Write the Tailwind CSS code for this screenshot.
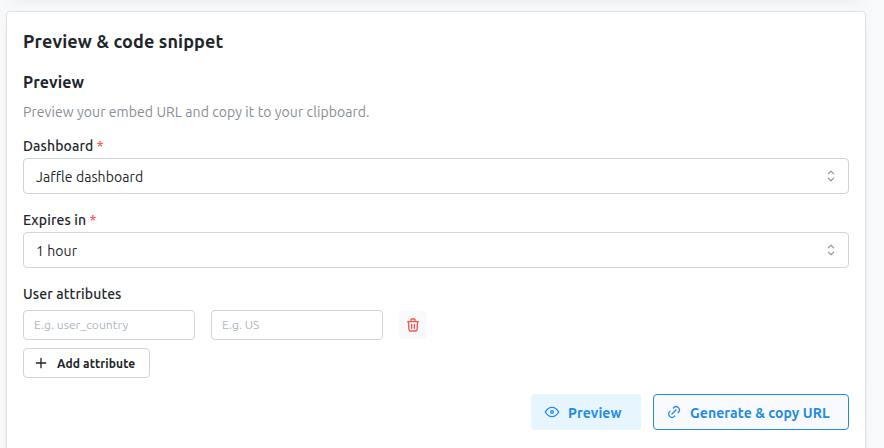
<!DOCTYPE html>
<html lang="en">
<head>
<meta charset="utf-8">
<title>Preview &amp; code snippet</title>
<script src="https://cdn.jsdelivr.net/npm/@tailwindcss/browser@4"></script>
</head>
<body class="h-[448px] overflow-hidden bg-[#f8f9fa] font-['Ubuntu','Noto_Sans',sans-serif] text-sm text-[#212529]">
<div class="flex h-[500px] w-[866px] flex-col pl-1.5">
  <div class="-mt-[44px] mb-[15px] h-10 shrink-0 rounded-sm border border-[#dee2e6] bg-white shadow-[0_1px_3px_rgba(0,0,0,0.05),0_10px_15px_-5px_rgba(0,0,0,0.05),0_7px_7px_-5px_rgba(0,0,0,0.04)]"></div>
  <main class="flex grow flex-col rounded-t-sm border border-[#dee2e6] bg-white px-4 pt-4 shadow-[0_1px_3px_rgba(0,0,0,0.05),0_10px_15px_-5px_rgba(0,0,0,0.05),0_7px_7px_-5px_rgba(0,0,0,0.04)]">
    <h1 class="h-7 text-lg leading-[27px] font-bold whitespace-nowrap"><span class="tracking-[0.13px]">Preview &amp; code snippet</span></h1>
    <h2 class="mt-[14px] h-6 text-base leading-6 font-bold"><span class="tracking-[0.08px]">Preview</span></h2>
    <p class="mt-[7px] h-[22px] leading-[22px] text-[#868e96]"><span class="tracking-[0.075px]">Preview your embed URL and copy it to your clipboard.</span></p>

    <label class="mt-3 h-[23px] leading-[23px] font-medium"><span class="tracking-[0.1px]">Dashboard</span> <span class="text-[#fa5252]">*</span></label>
    <div class="flex h-9 items-center justify-between rounded border border-[#ced4da] pr-2 pl-3">
      <span class="pt-0.5 tracking-[0.08px]">Jaffle dashboard</span>
      <svg class="size-[18px]" viewBox="0 0 15 15" fill="#868e96"><path fill-rule="evenodd" clip-rule="evenodd" d="M4.93179 5.43179C4.75605 5.60753 4.75605 5.89245 4.93179 6.06819C5.10753 6.24392 5.39245 6.24392 5.56819 6.06819L7.49999 4.13638L9.43179 6.06819C9.60753 6.24392 9.89245 6.24392 10.0682 6.06819C10.2439 5.89245 10.2439 5.60753 10.0682 5.43179L7.81819 3.18179C7.73379 3.0974 7.61933 3.04999 7.49999 3.04999C7.38064 3.04999 7.26618 3.0974 7.18179 3.18179L4.93179 5.43179ZM10.0682 9.56819C10.2439 9.39245 10.2439 9.10753 10.0682 8.93179C9.89245 8.75606 9.60753 8.75606 9.43179 8.93179L7.49999 10.8636L5.56819 8.93179C5.39245 8.75606 5.10753 8.75606 4.93179 8.93179C4.75605 9.10753 4.75605 9.39245 4.93179 9.56819L7.18179 11.8182C7.35753 11.9939 7.64245 11.9939 7.81819 11.8182L10.0682 9.56819Z"/></svg>
    </div>

    <label class="mt-[15px] h-[23px] leading-[23px] font-medium"><span class="tracking-[0.12px]">Expires in</span> <span class="text-[#fa5252]">*</span></label>
    <div class="flex h-9 items-center justify-between rounded border border-[#ced4da] pr-2 pl-3">
      <span class="pt-0.5 tracking-[0.08px]">1 hour</span>
      <svg class="size-[18px]" viewBox="0 0 15 15" fill="#868e96"><path fill-rule="evenodd" clip-rule="evenodd" d="M4.93179 5.43179C4.75605 5.60753 4.75605 5.89245 4.93179 6.06819C5.10753 6.24392 5.39245 6.24392 5.56819 6.06819L7.49999 4.13638L9.43179 6.06819C9.60753 6.24392 9.89245 6.24392 10.0682 6.06819C10.2439 5.89245 10.2439 5.60753 10.0682 5.43179L7.81819 3.18179C7.73379 3.0974 7.61933 3.04999 7.49999 3.04999C7.38064 3.04999 7.26618 3.0974 7.18179 3.18179L4.93179 5.43179ZM10.0682 9.56819C10.2439 9.39245 10.2439 9.10753 10.0682 8.93179C9.89245 8.75606 9.60753 8.75606 9.43179 8.93179L7.49999 10.8636L5.56819 8.93179C5.39245 8.75606 5.10753 8.75606 4.93179 8.93179C4.75605 9.10753 4.75605 9.39245 4.93179 9.56819L7.18179 11.8182C7.35753 11.9939 7.64245 11.9939 7.81819 11.8182L10.0682 9.56819Z"/></svg>
    </div>

    <label class="mt-[15px] h-[23px] leading-[23px] font-medium"><span class="tracking-[0.12px]">User attributes</span></label>
    <div class="mt-1 flex items-center gap-4 text-xs text-[#adb5bd]">
      <div class="flex h-[30px] w-[172px] items-center rounded border border-[#ced4da] px-[10px]"><span class="tracking-[0.07px]">E.g. user_country</span></div>
      <div class="flex h-[30px] w-[172px] items-center rounded border border-[#ced4da] px-[10px]"><span class="tracking-[0.07px]">E.g. US</span></div>
      <button class="flex size-7 items-center justify-center rounded bg-[#f8f9fa] text-[#fa5252]" aria-label="Remove attribute">
        <svg class="size-4" viewBox="0 0 24 24" fill="none" stroke="currentColor" stroke-width="2" stroke-linecap="round" stroke-linejoin="round"><path d="M4 7h16M10 11v6M14 11v6M5 7l1 12a2 2 0 0 0 2 2h8a2 2 0 0 0 2-2l1-12M9 7V4a1 1 0 0 1 1-1h4a1 1 0 0 1 1 1v3"/></svg>
      </button>
    </div>
    <button class="mt-2 flex h-[30px] w-[127px] items-center rounded border border-[#ced4da] pl-[9px] text-xs font-bold whitespace-nowrap">
      <svg class="mr-[8px] size-4" viewBox="0 0 24 24" fill="none" stroke="currentColor" stroke-width="2" stroke-linecap="round"><path d="M12 5v14M5 12h14"/></svg>
      <span class="pt-0.5 tracking-[0.12px]">Add attribute</span>
    </button>

    <div class="mt-4 flex justify-end gap-3 font-bold whitespace-nowrap text-[#228be6]">
      <button class="flex h-9 w-[110px] items-center rounded bg-[#e7f5ff] pl-[13px]">
        <svg class="mr-2 size-4" viewBox="0 0 24 24" fill="none" stroke="currentColor" stroke-width="2" stroke-linecap="round" stroke-linejoin="round"><circle cx="12" cy="12" r="2"/><path d="M22 12c-2.667 4.667-6 7-10 7s-7.333-2.333-10-7c2.667-4.667 6-7 10-7s7.333 2.333 10 7"/></svg>
        <span class="pt-0.5 tracking-[0.08px]">Preview</span>
      </button>
      <button class="flex h-9 w-[196px] items-center rounded border border-[#228be6] bg-[#f8faff] pl-[12px]">
        <svg class="mr-2 size-4" viewBox="0 0 24 24" fill="none" stroke="currentColor" stroke-width="2" stroke-linecap="round" stroke-linejoin="round"><path d="M9 15l6-6M11 6l.463-.536a5 5 0 0 1 7.071 7.072L18 13M13 18l-.397.534a5.068 5.068 0 0 1-7.127 0 4.972 4.972 0 0 1 0-7.071L6 11"/></svg>
        <span class="pt-0.5 tracking-[0.08px]">Generate &amp; copy URL</span>
      </button>
    </div>
  </main>
</div>
</body>
</html>
